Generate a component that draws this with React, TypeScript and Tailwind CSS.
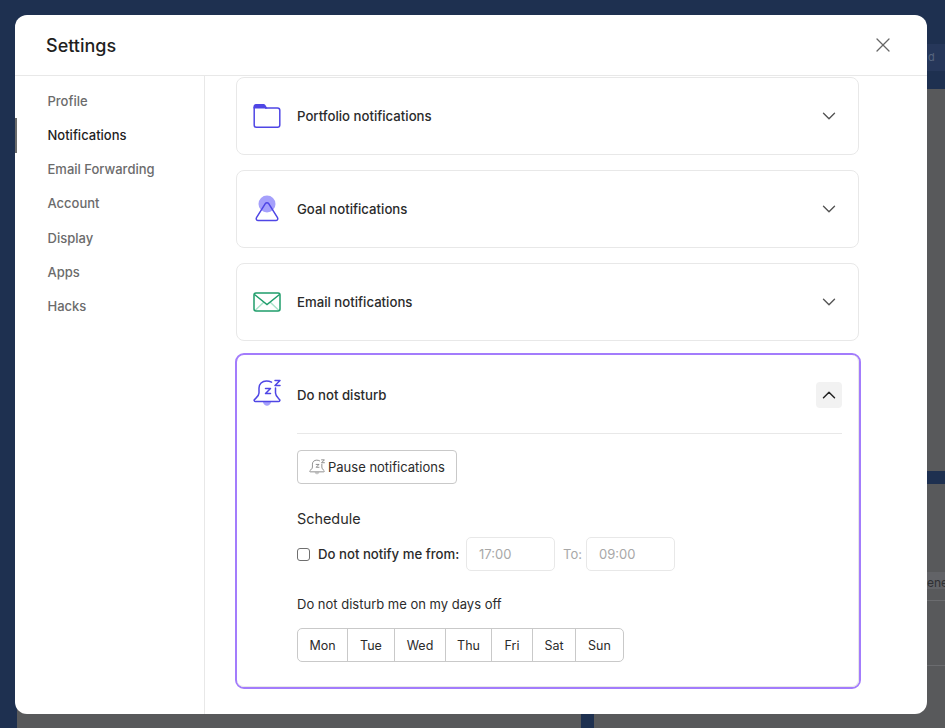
import React from 'react';
import { ChevronDown, ChevronUp, X } from 'lucide-react';

const navItems = ['Profile', 'Notifications', 'Email Forwarding', 'Account', 'Display', 'Apps', 'Hacks'];
const days = [
  { label: 'Mon', width: 'w-[50px]' },
  { label: 'Tue', width: 'w-[47px]' },
  { label: 'Wed', width: 'w-[51px]' },
  { label: 'Thu', width: 'w-[46px]' },
  { label: 'Fri', width: 'w-[41px]' },
  { label: 'Sat', width: 'w-[43px]' },
  { label: 'Sun', width: 'w-[47px]' },
];

function FolderIcon() {
  return (
    <svg width="28" height="26" viewBox="0 0 28 26" fill="none">
      <path d="M.5 3.500C.5 2 1.500 1 3 1h7.500c.8 0 1.400.3 1.800.9L14.500 5.500H.5z" fill="#4f46e5" />
      <path d="M1.200 4v18c0 1.300 1 2.300 2.300 2.300h21c1.300 0 2.300-1 2.300-2.300V7.200c0-1.300-1-2.300-2.300-2.300H12" stroke="#4f46e5" strokeWidth="1.500" />
    </svg>
  );
}

function GoalIcon() {
  return (
    <svg width="26" height="28" viewBox="0 0 26 28" fill="none">
      <circle cx="13" cy="9" r="8.500" fill="#a5a0fb" />
      <path d="M11.300 8.600c.8-1.300 2.600-1.300 3.400 0l8.800 14c.8 1.400-.1 3-1.700 3H4.200c-1.600 0-2.500-1.600-1.700-3z" stroke="#4f46e5" strokeWidth="1.500" strokeLinejoin="round" />
    </svg>
  );
}

function MailIcon() {
  return (
    <svg width="28" height="20" viewBox="0 0 28 20" fill="none">
      <path d="M2 18.500 11 10M26 18.500 17 10" stroke="#a7e3c9" strokeWidth="1.500" />
      <rect x="1" y="1" width="26" height="18" rx="2" stroke="#1f9d6b" strokeWidth="1.500" />
      <path d="M1.500 2.500 14 12.500 26.500 2.500" stroke="#1f9d6b" strokeWidth="1.500" />
    </svg>
  );
}

function BellZIcon({ size = 28, color = '#4f46e5', fill = '#a5a0fb', strokeWidth = 1.5 }: { size?: number; color?: string; fill?: string; strokeWidth?: number }) {
  return (
    <svg width={size} height={size} viewBox="0 0 28 28" fill="none">
      <path d="M10 23c.5 2.500 2.200 3.800 4 3.800s3.500-1.300 4-3.800z" fill={fill} />
      <path d="M18.500 3.200C17 2.400 15.500 2 13.500 2 9 2 6 5 6 9v5c0 3-2.500 4.500-4.500 6.500-.7.700-.3 2 1 2h23c1.300 0 1.700-1.300 1-2-2-2-4-3.500-4-6.500V9" stroke={color} strokeWidth={strokeWidth} strokeLinecap="round" />
      <path d="M12.500 9.500h5l-5 5h5" stroke={color} strokeWidth={strokeWidth} strokeLinecap="round" strokeLinejoin="round" />
      <path d="M22 1.500h5l-5 5h5" stroke={color} strokeWidth={strokeWidth} strokeLinecap="round" strokeLinejoin="round" />
    </svg>
  );
}

function CollapsedCard({ icon, label }: { icon: React.ReactNode; label: string }) {
  return (
    <div className="h-[78px] rounded-lg border border-[#e8e8e8] flex items-center pl-[16px] pr-[18px]">
      <div className="w-[28px] flex justify-center shrink-0">{icon}</div>
      <span className="ml-4 pt-px text-[13.2px] font-medium text-[#2b2b2b] grow">{label}</span>
      <ChevronDown className="w-[22px] h-[22px] text-[#555]" strokeWidth={1.5} />
    </div>
  );
}

export default function App() {
  return (
    <div className="relative w-[945px] h-[728px] overflow-hidden bg-[#58595b] flex flex-col font-['Inter',sans-serif]">
      {/* page behind the dialog */}
      <div className="h-[89px] shrink-0 bg-[#1e3050] pt-[44px] flex justify-end">
        <div className="w-[18px] h-[27px] bg-[#26375a] text-[11px] leading-[27px] text-[#56657f] overflow-hidden pl-px">d</div>
      </div>
      <div className="grow flex">
        <div className="w-[17px] bg-[#1e3050] shrink-0" />
        <div className="w-[564px] shrink-0" />
        <div className="w-[13px] bg-[#1e3050] shrink-0" />
        <div className="grow flex flex-col items-end">
          <div className="h-[382px] shrink-0" />
          <div className="h-[13px] w-full bg-[#1e3050] shrink-0" />
          <div className="h-[88px] shrink-0" />
          <div className="w-[18px] h-[17px] bg-[#626367] text-[12px] leading-[21px] text-[#2f3033] overflow-hidden whitespace-nowrap">enel</div>
          <div className="mt-[11px] w-[18px] h-px bg-[#6b6c6f]" />
          <div className="mt-[64px] w-[18px] h-px bg-[#6b6c6f]" />
        </div>
      </div>

      {/* dialog */}
      <div className="absolute left-[15px] top-[15px] w-[912px] h-[699px] bg-white rounded-[12px] flex flex-col overflow-hidden">
        <header className="h-[61px] shrink-0 border-b border-[#e8e8e8] flex items-center justify-between pl-[31px] pr-[32px]">
          <h1 className="text-[18px] font-medium text-[#1f1f1f]">Settings</h1>
          <X className="w-[24px] h-[24px] text-[#666]" strokeWidth={1.3} />
        </header>
        <div className="flex grow min-h-0">
          <nav className="relative w-[190px] shrink-0 border-r border-[#e8e8e8] pt-[8.500px] pl-[32.500px] flex flex-col">
            <div className="absolute left-0 top-[42px] w-[2px] h-[35px] bg-[#6b6b6b]" />
            {navItems.map((item) => (
              <div
                key={item}
                className={`h-[34.200px] flex items-center text-[13px] font-medium ${item === 'Notifications' ? 'text-[#1f1f1f]' : 'text-[#6b6b6b]'}`}
              >
                {item}
              </div>
            ))}
          </nav>
          <main className="w-[654px] shrink-0 pt-px pl-[31px] flex flex-col gap-[15px]">
            <CollapsedCard icon={<FolderIcon />} label="Portfolio notifications" />
            <CollapsedCard icon={<GoalIcon />} label="Goal notifications" />
            <CollapsedCard icon={<MailIcon />} label="Email notifications" />

            {/* expanded card */}
            <div className="-mt-[3px] -ml-px w-[626px] h-[336px] rounded-[9px] border-2 border-[#a37cfc]">
              <div className="h-full rounded-[7px] border-b border-r border-[#e8e8e8] px-[16px] flex gap-4">
                <div className="w-[28px] pt-[24px] shrink-0">
                  <BellZIcon />
                </div>
                <div className="grow">
                  <div className="h-[79px] pt-px flex items-center border-b border-[#e8e8e8]">
                    <span className="text-[13.200px] pt-[3px] font-medium text-[#2b2b2b] grow">Do not disturb</span>
                    <div className="w-[26px] h-[26px] rounded-[4px] bg-[#f2f2f2] flex items-center justify-center">
                      <ChevronUp className="w-[22px] h-[22px] text-[#222]" strokeWidth={1.6} />
                    </div>
                  </div>
                  <div className="pt-[16px]">
                    <button className="h-[34px] pl-[11px] pr-[11px] rounded-[4px] border border-[#c9c9c9] flex items-center gap-[3px] text-[13px] text-[#2b2b2b]">
                      <BellZIcon size={16} color="#6b6b6b" fill="#c9c9c9" strokeWidth={1.300} />
                      <span className="pt-px">Pause notifications</span>
                    </button>
                    <h2 className="mt-[25px] text-[14.400px] leading-[20px] text-[#2b2b2b]">Schedule</h2>
                    <div className="mt-[8px] flex items-center">
                      <span className="w-[13px] h-[13px] rounded-[3px] border border-[#6f6f6f] bg-white shrink-0" />
                      <span className="ml-[8px] w-[141px] pt-px text-[13.200px] font-medium text-[#2b2b2b] whitespace-nowrap">Do not notify me from:</span>
                      <div className="ml-[7px] w-[89px] h-[34px] rounded-[5px] border border-[#e8e8e8] flex items-center pl-[12px] pt-px text-[13px] text-[#a8a8a8]">17:00</div>
                      <span className="ml-[8px] w-[19px] pt-px text-[13px] text-[#a8a8a8]">To:</span>
                      <div className="ml-[4px] w-[89px] h-[34px] rounded-[5px] border border-[#e8e8e8] flex items-center pl-[12px] pt-px text-[13px] text-[#a8a8a8]">09:00</div>
                    </div>
                    <p className="mt-[24px] text-[13px] leading-[18px] text-[#2b2b2b]">Do not disturb me on my days off</p>
                    <div className="mt-[15px] inline-flex h-[34px] rounded-[5px] border border-[#c9c9c9] text-[12.500px] text-[#2b2b2b]">
                      {days.map((day) => (
                        <div key={day.label} className={`${day.width} pt-[2px] flex items-center justify-center border-r border-[#c9c9c9] last:border-r-0`}>
                          {day.label}
                        </div>
                      ))}
                    </div>
                  </div>
                </div>
              </div>
            </div>
          </main>
        </div>
      </div>
    </div>
  );
}
